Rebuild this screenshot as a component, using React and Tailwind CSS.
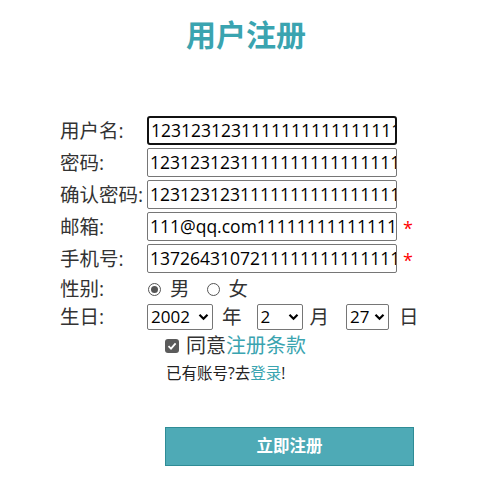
import React from "react";

const F = "font-['Segoe_UI','Open_Sans','Noto_Sans_CJK_SC',sans-serif]";

function Chevron() {
  return (
    <svg width="11" height="8" viewBox="0 0 11 8" className="shrink-0">
      <path d="M1.5 1.8 L5.5 5.8 L9.5 1.8" fill="none" stroke="#000" strokeWidth="2.2" />
    </svg>
  );
}

function Sel({ value, w }) {
  return (
    <div className={`flex items-center justify-between h-[26px] border border-[#767676] rounded-[2px] pl-[3px] pr-[3px] text-[17px] text-black ${w}`}>
      <span>{value}</span>
      <Chevron />
    </div>
  );
}

function Row({ label, value, focused, star }) {
  return (
    <div className="flex items-center h-[29px] mb-[3px]">
      <div className="w-[87px] shrink-0 text-[19.5px] text-[#333] whitespace-nowrap leading-none">{label}</div>
      <div
        className={`w-[250px] shrink-0 h-[29px] flex items-center overflow-hidden whitespace-nowrap text-[17.5px] text-black px-[2px] ${
          focused ? "border-2 border-[#111] rounded-[3px]" : "border border-[#767676] rounded-[2px]"
        }`}
      >
        {value}
      </div>
      {star && <span className="ml-[6px] text-[#f00] text-[18px] leading-none mt-[3px]">*</span>}
    </div>
  );
}

export default function App() {
  return (
    <div className={`w-[477px] h-[491px] bg-white ${F}`}>
      <div className="pt-[17px] pl-[15px] text-center text-[30px] font-bold text-[#3aa4b0] leading-[36px]">用户注册</div>
      <div className="pl-[60px] pt-[63px]">
        <Row label="用户名:" value="123123123111111111111111111111" focused />
        <Row label="密码:" value="123123123111111111111111111111" />
        <Row label="确认密码:" value="123123123111111111111111111111" />
        <Row label="邮箱:" value="111@qq.com111111111111111111" star />
        <Row label="手机号:" value="137264310721111111111111111111" star />
        <div className="flex items-center h-[26px] mt-[1px] text-[19.5px] text-[#333]">
          <div className="w-[87px]">性别:</div>
          <span className="w-[13px] h-[13px] rounded-full border border-[#555] flex items-center justify-center ml-[1px]">
            <span className="w-[7px] h-[7px] rounded-full bg-[#555]" />
          </span>
          <span className="ml-[9px]">男</span>
          <span className="w-[13px] h-[13px] rounded-full border border-[#555] ml-[17px]" />
          <span className="ml-[9px]">女</span>
        </div>
        <div className="flex items-center h-[26px] mt-[2px] text-[19.5px] text-[#333]">
          <div className="w-[87px]">生日:</div>
          <Sel value="2002" w="w-[66px]" />
          <span className="ml-[9px]">年</span>
          <div className="ml-[15px]"><Sel value="2" w="w-[46px]" /></div>
          <span className="ml-[7px]">月</span>
          <div className="ml-[17px]"><Sel value="27" w="w-[43px]" /></div>
          <span className="ml-[10px]">日</span>
        </div>
        <div className="flex items-center h-[20px] mt-[6px] ml-[105px] text-[20px] text-[#333]">
          <span className="w-[14px] h-[14px] rounded-[3px] bg-[#5b5b5b] flex items-center justify-center">
            <svg width="10" height="10" viewBox="0 0 10 10">
              <path d="M1.5 5.2 L4 7.6 L8.6 2.4" fill="none" stroke="#fff" strokeWidth="1.8" />
            </svg>
          </span>
          <span className="ml-[7px]">同意<span className="text-[#3aa4b0]">注册条款</span></span>
        </div>
        <div className="ml-[106px] mt-[7px] text-[15.5px] text-[#222] leading-[20px]">
          已有账号?去<span className="text-[#3aa4b0]">登录</span>!
        </div>
        <div className="ml-[105px] mt-[44px] w-[249px] h-[39px] bg-[#4eaab6] border border-[#2f8c96] flex items-center justify-center text-white text-[16.5px] font-bold">
          立即注册
        </div>
      </div>
    </div>
  );
}
